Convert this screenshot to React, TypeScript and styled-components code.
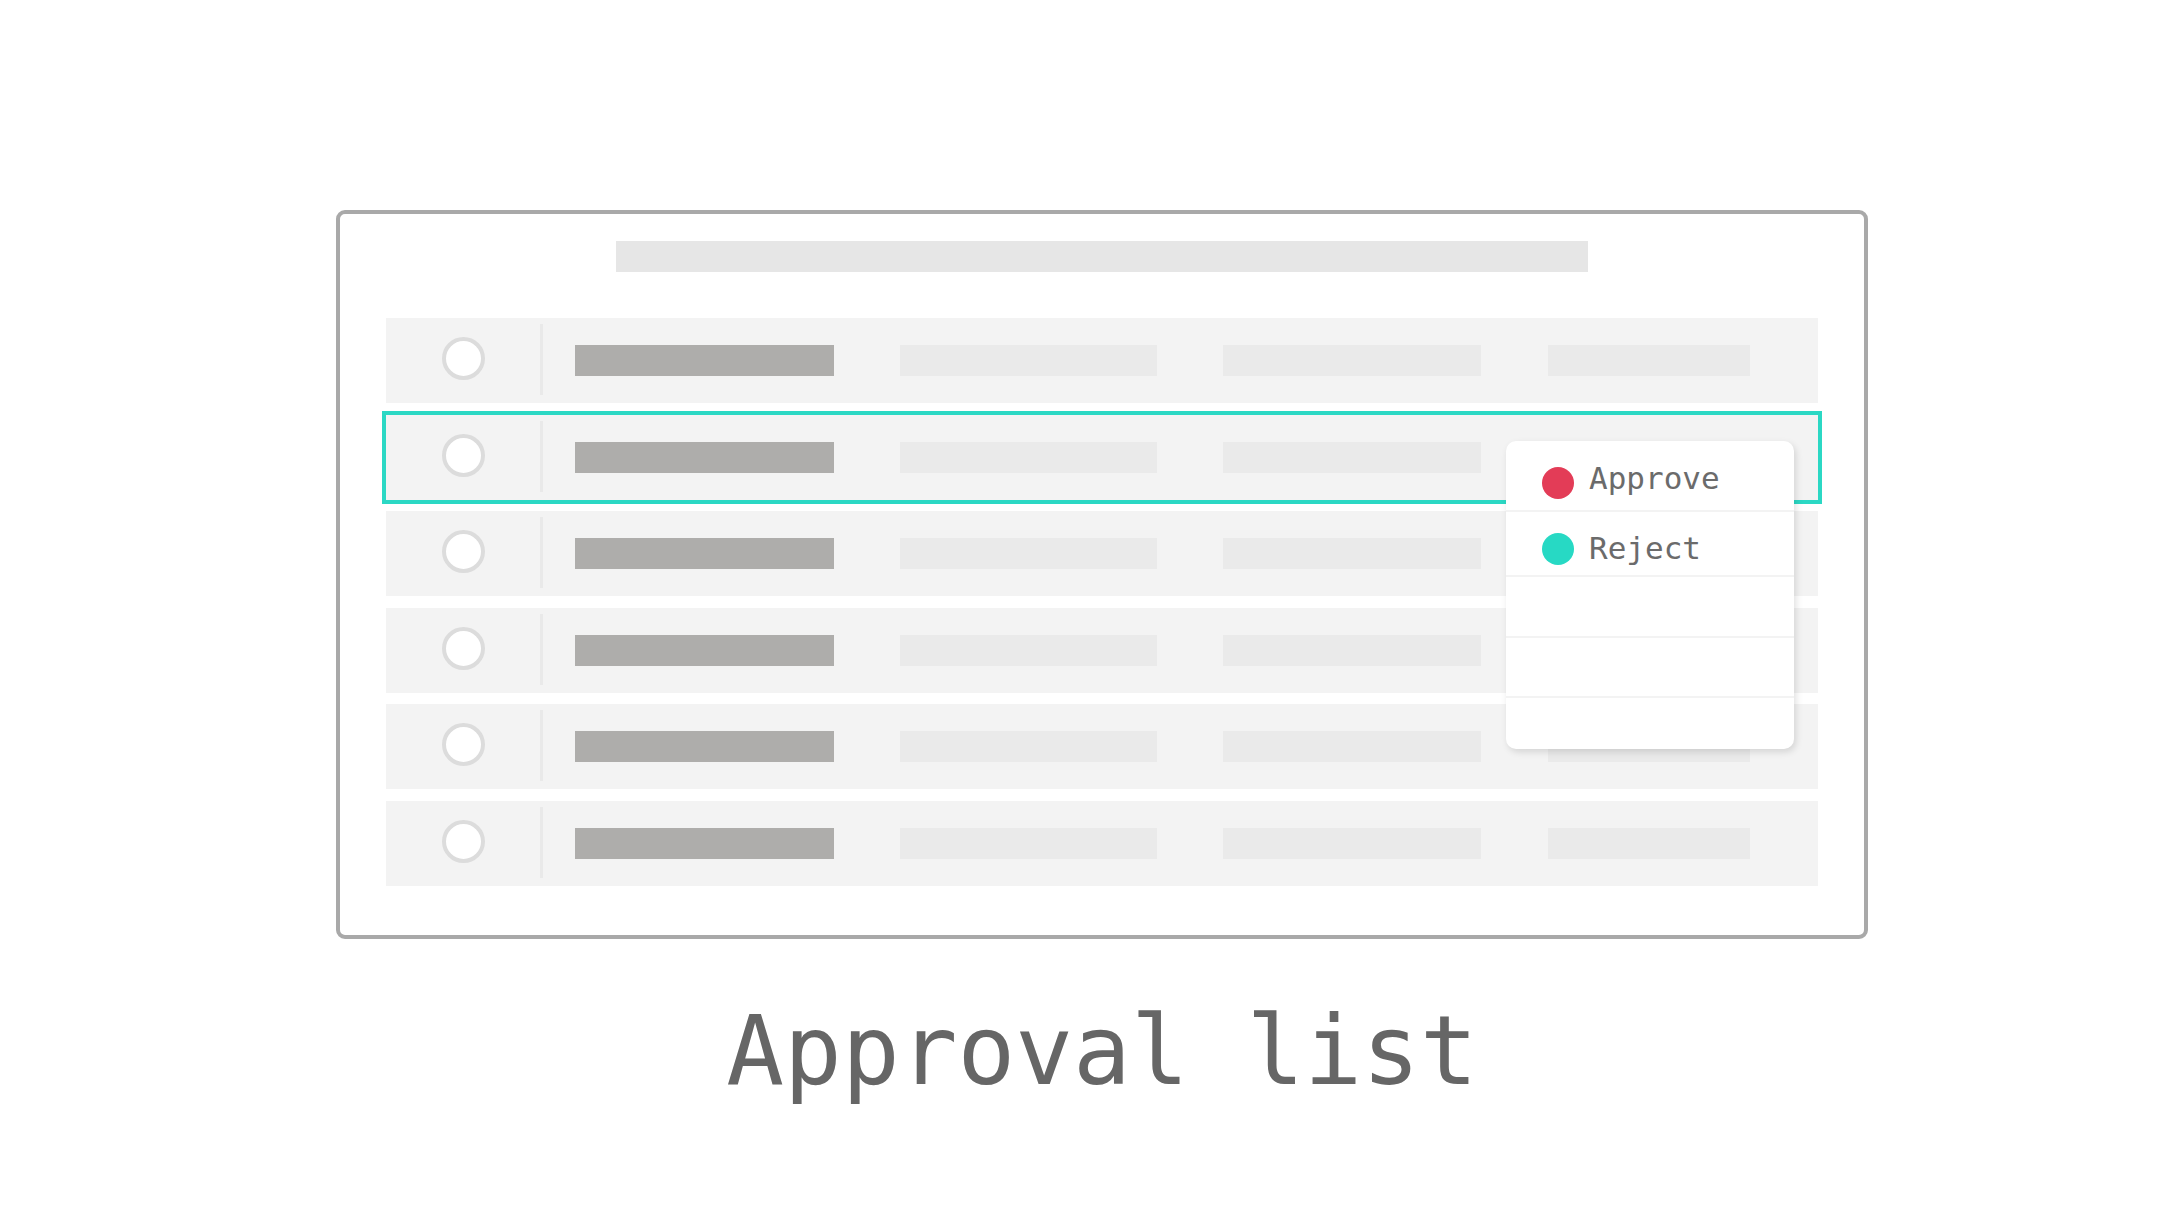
import styled, { createGlobalStyle } from 'styled-components';

const GlobalStyle = createGlobalStyle`
  html, body {
    margin: 0;
    padding: 0;
    background: #ffffff;
  }
  body {
    font-family: 'DejaVu Sans Mono', 'Liberation Mono', monospace;
  }
`;

const columns = [
  { width: 259, gap: 0, dark: true },
  { width: 257, gap: 66, dark: false },
  { width: 258, gap: 66, dark: false },
  { width: 202, gap: 67, dark: false },
];

const menuItems = [
  { label: 'Approve', color: '#e33c57', height: 69, top: 26, shift: -5 },
  { label: 'Reject', color: '#27d9c4', height: 65, top: 21, shift: -1 },
  { label: '', color: '', height: 61, top: 0, shift: 0 },
  { label: '', color: '', height: 60, top: 0, shift: 0 },
  { label: '', color: '', height: 53, top: 0, shift: 0 },
];

export default function App() {
  const rows = [0, 1, 2, 3, 4, 5];
  const selectedRow = 1;

  return (
    <Page>
      <GlobalStyle />
      <Frame>
        <HeaderBar />
        <RowList>
          {rows.map((row) => (
            <Row key={row} $selected={row === selectedRow}>
              <Radio />
              <ColDivider />
              {columns.map((col, i) => (
                <Bar key={i} $width={col.width} $gap={col.gap} $dark={col.dark} />
              ))}
              {row === selectedRow && (
                <Menu>
                  {menuItems.map((item, i) => (
                    <MenuItem key={i} $height={item.height} $top={item.top}>
                      {item.label && (
                        <>
                          <Dot $color={item.color} />
                          <MenuLabel $shift={item.shift}>{item.label}</MenuLabel>
                        </>
                      )}
                    </MenuItem>
                  ))}
                </Menu>
              )}
            </Row>
          ))}
        </RowList>
      </Frame>
      <Title>Approval list</Title>
    </Page>
  );
}

const Page = styled.div`
  width: 2184px;
  height: 1228px;
  box-sizing: border-box;
  padding: 210px 0 0 336px;
  display: flex;
  flex-direction: column;
  align-items: flex-start;
`;

const Frame = styled.div`
  width: 1532px;
  height: 729px;
  box-sizing: border-box;
  border: 4px solid #a9a9a9;
  border-radius: 9px;
  padding: 27px 46px 0;
  display: flex;
  flex-direction: column;
  align-items: center;
`;

const HeaderBar = styled.div`
  width: 972px;
  height: 31px;
  background: #e6e6e6;
`;

const RowList = styled.div`
  margin-top: 46px;
  width: 100%;
  display: flex;
  flex-direction: column;
  gap: 11.6px;
`;

const Row = styled.div<{ $selected: boolean }>`
  position: relative;
  height: 85px;
  background: #f3f3f3;
  display: flex;
  align-items: center;
  padding-left: 56px;
  box-shadow: ${({ $selected }) => ($selected ? '0 0 0 4px #2bd8c4' : 'none')};
`;

const Radio = styled.div`
  width: 43px;
  height: 43px;
  box-sizing: border-box;
  border-radius: 50%;
  border: 4px solid #dcdcdc;
  background: #ffffff;
  margin-top: -4px;
`;

const ColDivider = styled.div`
  align-self: stretch;
  width: 3px;
  margin: 6px 32px 8px 55px;
  background: #e9e9e9;
`;

const Bar = styled.div<{ $width: number; $gap: number; $dark: boolean }>`
  width: ${({ $width }) => $width}px;
  height: 31px;
  margin-left: ${({ $gap }) => $gap}px;
  background: ${({ $dark }) => ($dark ? '#aeadab' : '#eaeaea')};
`;

const Menu = styled.div`
  position: absolute;
  left: 1120px;
  top: 26px;
  z-index: 2;
  width: 288px;
  background: #ffffff;
  border-radius: 10px;
  box-shadow: 2px 3px 7px rgba(0, 0, 0, 0.13);
  overflow: hidden;
  display: flex;
  flex-direction: column;
`;

const MenuItem = styled.div<{ $height: number; $top: number }>`
  height: ${({ $height }) => $height}px;
  box-sizing: border-box;
  padding: ${({ $top }) => $top}px 0 0 36px;
  display: flex;
  align-items: flex-start;
  gap: 15px;
  & + & {
    border-top: 2px solid #f3f3f3;
  }
`;

const Dot = styled.span<{ $color: string }>`
  width: 32px;
  height: 32px;
  border-radius: 50%;
  background: ${({ $color }) => $color};
  flex-shrink: 0;
`;

const MenuLabel = styled.span<{ $shift: number }>`
  font-family: 'DejaVu Sans Mono', 'Liberation Mono', monospace;
  font-size: 31px;
  line-height: 32px;
  margin-top: ${({ $shift }) => $shift}px;
  color: #6b6b6b;
`;

const Title = styled.h1`
  margin: 64px 0 0;
  width: 1532px;
  text-align: center;
  font-family: 'DejaVu Sans Mono', 'Liberation Mono', monospace;
  font-weight: normal;
  font-size: 96px;
  line-height: 96px;
  color: #666666;
`;
